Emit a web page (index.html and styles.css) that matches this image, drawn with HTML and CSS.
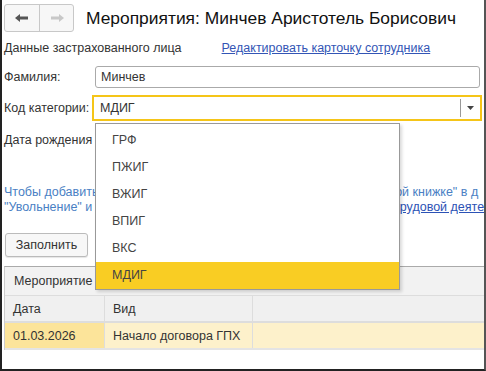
FILE: index.html
```html
<!DOCTYPE html>
<html lang="ru">
<head>
    <meta charset="UTF-8">
    <title>Мероприятия</title>
    <link rel="stylesheet" href="styles.css">
</head>
<body>
    <div class="window">
        <div class="title-bar">
            <div class="nav">
                <button class="nav-btn">
                    <svg width="14" height="10" viewBox="0 0 14 10"><path d="M0 5 L5 1 L5 3.5 L13 3.5 L13 6.5 L5 6.5 L5 9 Z" fill="#555"/></svg>
                </button>
                <button class="nav-btn">
                    <svg width="14" height="10" viewBox="0 0 14 10"><path d="M14 5 L9 1 L9 3.5 L1 3.5 L1 6.5 L9 6.5 L9 9 Z" fill="#c8c8c8"/></svg>
                </button>
            </div>
            <h1 class="title">Мероприятия: Минчев Аристотель Борисович</h1>
        </div>

        <div class="row section">
            <span class="label">Данные застрахованного лица</span>
            <a class="link" href="#">Редактировать карточку сотрудника</a>
        </div>

        <div class="row field">
            <span class="label label-f">Фамилия:</span>
            <div class="input">Минчев</div>
        </div>

        <div class="row field field-k">
            <span class="label label-k">Код категории:</span>
            <div class="input input-active">
                <span class="value">МДИГ</span>
                <span class="drop"><svg width="7" height="4" viewBox="0 0 7 4"><path d="M0 0 L7 0 L3.5 4 Z" fill="#444"/></svg></span>
            </div>
            <ul class="dropdown">
                <li>ГРФ</li>
                <li>ПЖИГ</li>
                <li>ВЖИГ</li>
                <li>ВПИГ</li>
                <li>ВКС</li>
                <li class="selected">МДИГ</li>
            </ul>
        </div>

        <div class="row birth">
            <span class="label">Дата рождения</span>
        </div>

        <div class="hint">
            <div class="hint-line">Чтобы добавить мероприятия "Прием на работу", "Запись о трудовой книжке" в д</div>
            <div class="hint-line">"Увольнение" и все другие мероприятия, перейдите в сведениях о т<a href="#">рудовой деяте</a></div>
        </div>

        <button class="btn">Заполнить</button>

        <div class="grid">
            <div class="grid-group"><span>Мероприятие</span></div>
            <div class="grid-row grid-head">
                <div class="cell c1">Дата</div>
                <div class="cell c2">Вид</div>
                <div class="cell c3"></div>
            </div>
            <div class="grid-row grid-sel">
                <div class="cell c1">01.03.2026</div>
                <div class="cell c2">Начало договора ГПХ</div>
                <div class="cell c3"></div>
            </div>
        </div>
    </div>
</body>
</html>
```

FILE: styles.css
```css
* { box-sizing: border-box; }

body { margin: 0; font-family: "Liberation Sans", Arial, sans-serif; font-size: 12.5px; color: #333; background: #fff; }

.window { position: relative; width: 486px; height: 371px; border-left: 2px solid #222; border-right: 2px solid #555; border-bottom: 2px solid #222; padding: 4px 0 0 2px; overflow: hidden; }

.title-bar { display: flex; align-items: center; height: 28px; }
.nav { display: flex; border: 1px solid #c8c8c8; border-radius: 3px; background: #f7f7f7; }
.nav-btn { width: 34px; height: 26px; border: none; background: transparent; padding: 0; display: flex; align-items: center; justify-content: center; }
.nav-btn + .nav-btn { border-left: 1px solid #c8c8c8; }
.title { margin: 0 0 0 12px; font-size: 17.4px; font-weight: normal; color: #111; white-space: nowrap; }

.row { display: flex; align-items: center; }
.section { margin-top: 8px; height: 16px; }
.label { white-space: nowrap; }
.link { margin-left: 40px; color: #3355b5; text-decoration: underline; }

.field { position: relative; margin-top: 10px; }
.field-k { margin-top: 7px; }
.label-f { width: 91px; }
.label-k { width: 88px; }
.input { flex: 1; height: 22px; margin-right: 4px; border: 1px solid #aaa; border-radius: 3px; padding: 3px 5px; color: #333; }
.input-active { display: flex; align-items: center; margin-right: 2px; height: 26px; border: 2px solid #f5c518; border-radius: 0; padding: 0 0 0 6px; }
.input-active .value { flex: 1; }
.drop { width: 20px; height: 18px; border-left: 1px solid #999; display: flex; align-items: center; justify-content: center; }

.dropdown { position: absolute; left: 91px; top: 28px; width: 305px; margin: 0; padding: 3px 0 0; list-style: none; background: #fff; border: 1px solid #999; box-shadow: 2px 2px 3px rgba(0, 0, 0, 0.15); z-index: 5; }
.dropdown li { height: 27px; line-height: 27px; padding-left: 16px; color: #444; }
.dropdown .selected { background: #f9cd23; }

.birth { margin-top: 11px; height: 16px; }

.hint { margin-top: 37px; color: #4a7fc4; line-height: 15px; white-space: nowrap; }
.hint a { color: #2c52b5; }

.btn { display: block; margin: 18px 0 0 1px; width: 83px; height: 24px; border: 1px solid #bbb; border-radius: 3px; background: #f7f7f7; font: inherit; color: #333; box-shadow: 0 1px 1px rgba(0, 0, 0, 0.1); }

.grid { margin-top: 9px; border-top: 1px solid #aaa; border-left: 1px solid #ccc; }
.grid-group { height: 29px; background: #f2f2f2; border-bottom: 1px solid #ddd; display: flex; align-items: center; padding-left: 9px; }
.grid-row { display: flex; height: 27px; }
.grid-head { background: #f0f0f0; border-bottom: 2px solid #ddd; }
.grid-sel { border-bottom: 2px solid #e4e4e4; }
.cell { display: flex; align-items: center; padding-left: 8px; border-right: 1px solid #ddd; }
.c1 { width: 100px; }
.c2 { width: 148px; }
.c3 { flex: 1; border-right: none; }
.grid-sel .c1 { background: #fce49a; }
.grid-sel .c2, .grid-sel .c3 { background: #fdf1cb; }
```
